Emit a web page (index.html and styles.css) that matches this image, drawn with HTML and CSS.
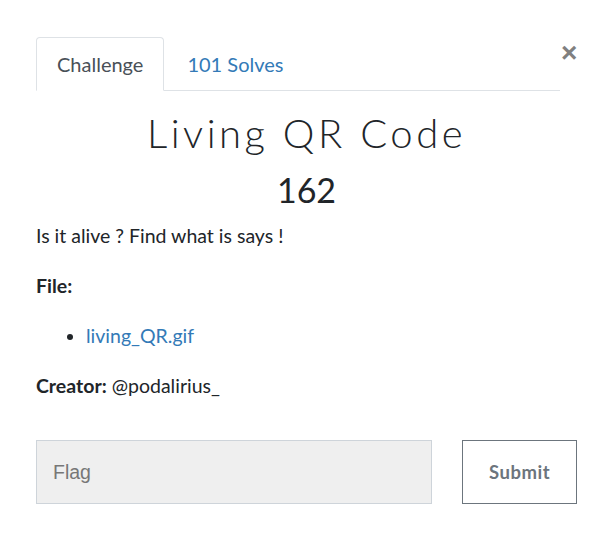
FILE: index.html
```html
<!DOCTYPE html>
<html>
<head>
<meta charset="utf-8">
<link rel="stylesheet" href="styles.css">
</head>
<body>
<div class="modal">
  <div class="head">
    <ul class="tabs">
      <li class="tab active">Challenge</li>
      <li class="tab link">101 Solves</li>
    </ul>
    <button class="close" aria-label="Close">&times;</button>
  </div>
  <h2 class="title">Living QR Code</h2>
  <h3 class="value">162</h3>
  <div class="desc">
    <p>Is it alive ? Find what is says !</p>
    <p><strong>File:</strong></p>
    <ul class="files"><li><a href="#">living_QR.gif</a></li></ul>
    <p><strong>Creator:</strong> @podalirius_</p>
  </div>
  <form class="submit-row">
    <input class="flag" type="text" placeholder="Flag">
    <button class="btn" type="button">Submit</button>
  </form>
</div>
</body>
</html>
```

FILE: styles.css
```css
html, body {
  margin: 0;
  padding: 0;
  background: #fff;
}
body {
  font-family: Lato, "Noto Sans", sans-serif;
  color: #212529;
}
.modal {
  width: 541px;
  padding: 37px 0 0 36px;
}
.head {
  display: flex;
  align-items: flex-start;
}
.tabs {
  list-style: none;
  margin: 0;
  padding: 0;
  display: flex;
  width: 525px;
  border-bottom: 1px solid #dee2e6;
}
.tab {
  font-size: 20px;
  line-height: 24px;
  padding: 14px 20px;
  border: 1px solid transparent;
  border-top-left-radius: 4px;
  border-top-right-radius: 4px;
  margin-bottom: -1px;
}
.tab.active {
  color: #495057;
  border-color: #dee2e6 #dee2e6 #fff;
  background: #fff;
}
.tab.link {
  color: #337ab7;
  padding-left: 22px;
}
.close {
  border: 0;
  background: none;
  padding: 0;
  margin: 2px 0 0 1px;
  font-family: "Liberation Sans", sans-serif;
  font-size: 28px;
  font-weight: 700;
  line-height: 28px;
  color: #808080;
  width: 16px;
}
.title {
  margin: 20px 0 0;
  text-align: center;
  font-weight: 300;
  font-size: 40px;
  line-height: 44px;
  letter-spacing: 3.5px;
  color: #212529;
}
.value {
  margin: 15px 0 0;
  text-align: center;
  font-weight: 400;
  font-size: 34px;
  line-height: 40px;
  color: #212529;
}
.desc {
  font-size: 19.5px;
  line-height: 29px;
  color: #212529;
  margin-top: 11px;
}
.desc p {
  margin: 0 0 21px;
}
.desc strong {
  font-weight: 700;
}
.files {
  margin: 0 0 21px;
  padding-left: 50px;
}
.files a {
  color: #337ab7;
  text-decoration: none;
}
.submit-row {
  display: flex;
  gap: 30px;
  margin-top: 40px;
}
.flag {
  box-sizing: border-box;
  width: 397px;
  height: 64px;
  margin: 0;
  background: #efefef;
  border: 1px solid #ced4da;
  padding: 0 16px;
  font-family: "Liberation Sans", sans-serif;
  font-size: 19.5px;
  color: #495057;
}
.flag::placeholder {
  color: #777;
}
.btn {
  box-sizing: border-box;
  width: 115px;
  height: 64px;
  margin: 0;
  background: #fff;
  border: 1px solid #6c757d;
  border-radius: 0;
  font-family: Lato, sans-serif;
  font-weight: 700;
  font-size: 18.5px;
  color: #6c757d;
  letter-spacing: 0.5px;
}
```
